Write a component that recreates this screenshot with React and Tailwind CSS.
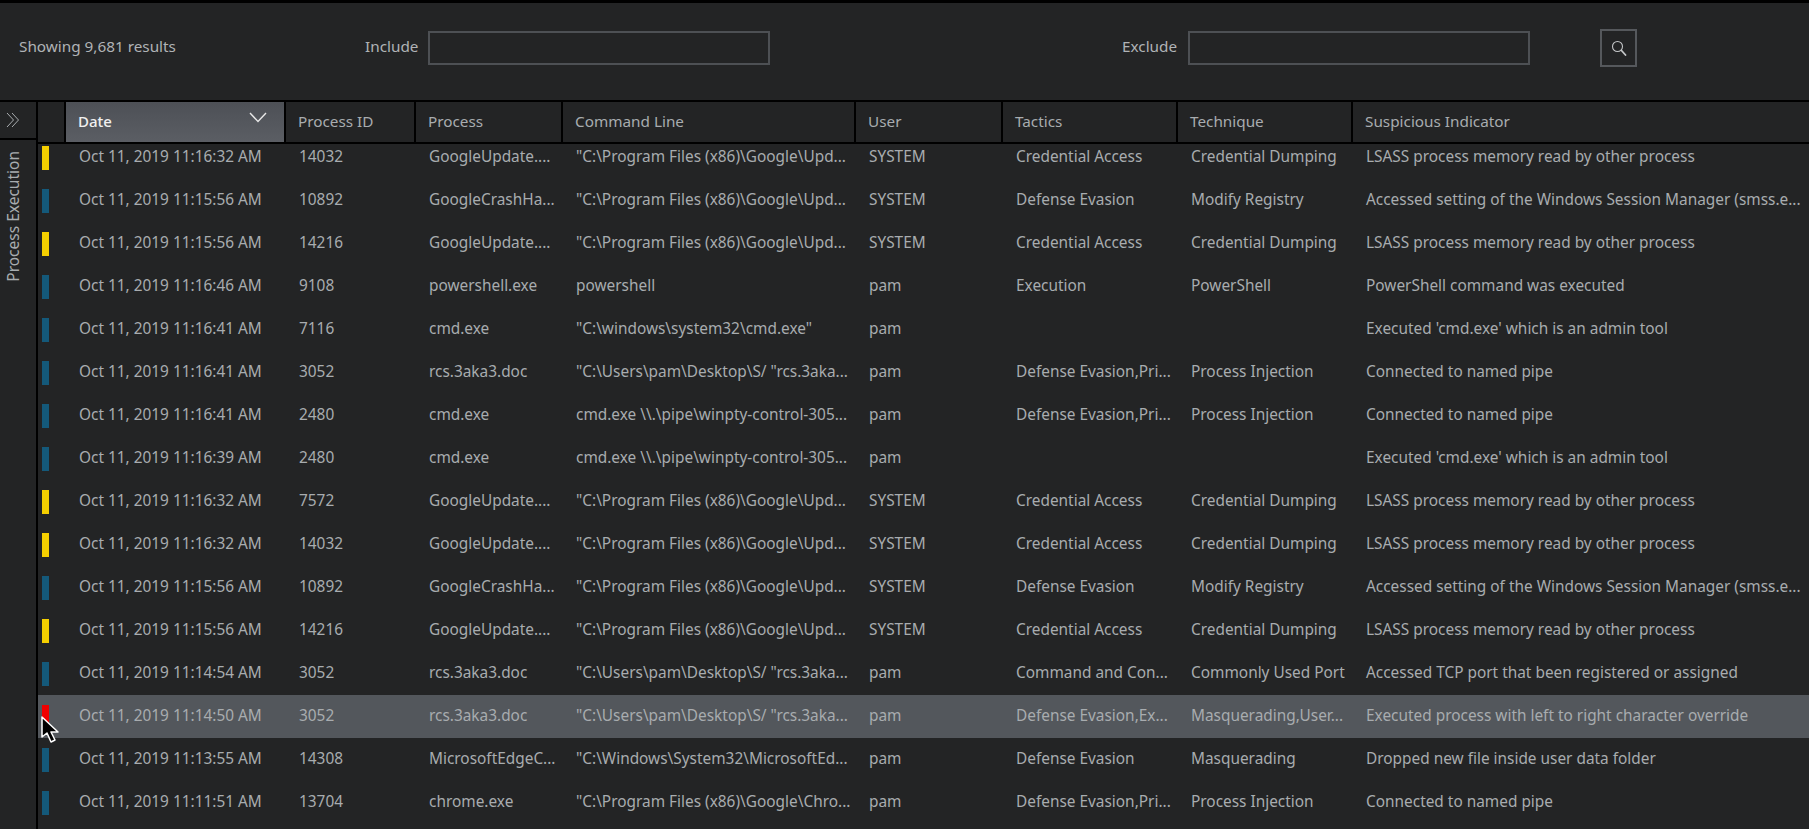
const GRID =
  "grid grid-cols-[28px_220px_130px_147px_293px_147px_175px_175px_1fr]";

const PF = '"C:\\Program Files (x86)\\Google\\Upd...';
const RCS = '"C:\\Users\\pam\\Desktop\\S/ "rcs.3aka...';
const LSASS = "LSASS process memory read by other process";
const SMSS = "Accessed setting of the Windows Session Manager (smss.e...";
const ADMIN = "Executed 'cmd.exe' which is an admin tool";
const PIPE = "Connected to named pipe";

const rows = [
  ["y", "Oct 11, 2019 11:16:32 AM", "14032", "GoogleUpdate....", PF, "SYSTEM", "Credential Access", "Credential Dumping", LSASS],
  ["b", "Oct 11, 2019 11:15:56 AM", "10892", "GoogleCrashHa...", PF, "SYSTEM", "Defense Evasion", "Modify Registry", SMSS],
  ["y", "Oct 11, 2019 11:15:56 AM", "14216", "GoogleUpdate....", PF, "SYSTEM", "Credential Access", "Credential Dumping", LSASS],
  ["b", "Oct 11, 2019 11:16:46 AM", "9108", "powershell.exe", "powershell", "pam", "Execution", "PowerShell", "PowerShell command was executed"],
  ["b", "Oct 11, 2019 11:16:41 AM", "7116", "cmd.exe", '"C:\\windows\\system32\\cmd.exe"', "pam", "", "", ADMIN],
  ["b", "Oct 11, 2019 11:16:41 AM", "3052", "rcs.3aka3.doc", RCS, "pam", "Defense Evasion,Pri...", "Process Injection", PIPE],
  ["b", "Oct 11, 2019 11:16:41 AM", "2480", "cmd.exe", "cmd.exe \\\\.\\pipe\\winpty-control-305...", "pam", "Defense Evasion,Pri...", "Process Injection", PIPE],
  ["b", "Oct 11, 2019 11:16:39 AM", "2480", "cmd.exe", "cmd.exe \\\\.\\pipe\\winpty-control-305...", "pam", "", "", ADMIN],
  ["y", "Oct 11, 2019 11:16:32 AM", "7572", "GoogleUpdate....", PF, "SYSTEM", "Credential Access", "Credential Dumping", LSASS],
  ["y", "Oct 11, 2019 11:16:32 AM", "14032", "GoogleUpdate....", PF, "SYSTEM", "Credential Access", "Credential Dumping", LSASS],
  ["b", "Oct 11, 2019 11:15:56 AM", "10892", "GoogleCrashHa...", PF, "SYSTEM", "Defense Evasion", "Modify Registry", SMSS],
  ["y", "Oct 11, 2019 11:15:56 AM", "14216", "GoogleUpdate....", PF, "SYSTEM", "Credential Access", "Credential Dumping", LSASS],
  ["b", "Oct 11, 2019 11:14:54 AM", "3052", "rcs.3aka3.doc", RCS, "pam", "Command and Con...", "Commonly Used Port", "Accessed TCP port that been registered or assigned"],
  ["r", "Oct 11, 2019 11:14:50 AM", "3052", "rcs.3aka3.doc", RCS, "pam", "Defense Evasion,Ex...", "Masquerading,User...", "Executed process with left to right character override"],
  ["b", "Oct 11, 2019 11:13:55 AM", "14308", "MicrosoftEdgeC...", '"C:\\Windows\\System32\\MicrosoftEd...', "pam", "Defense Evasion", "Masquerading", "Dropped new file inside user data folder"],
  ["b", "Oct 11, 2019 11:11:51 AM", "13704", "chrome.exe", '"C:\\Program Files (x86)\\Google\\Chro...', "pam", "Defense Evasion,Pri...", "Process Injection", PIPE],
];

const markers = {
  y: "bg-[#f5cf00]",
  b: "bg-[#14597a]",
  r: "bg-[#f00000]",
};

const headers = [
  "Process ID",
  "Process",
  "Command Line",
  "User",
  "Tactics",
  "Technique",
  "Suspicious Indicator",
];

function Cursor() {
  return (
    <svg
      className="absolute left-[40px] top-[713px]"
      width="20"
      height="27"
      viewBox="0 0 20 27"
    >
      <path
        d="M2 1 L2 21 L7 17 L11 26 L15 24 L11 16 L18 16 Z"
        fill="#000"
        stroke="#fff"
        strokeWidth="1.5"
        strokeLinejoin="round"
      />
    </svg>
  );
}

export default function App() {
  return (
    <div className="relative flex h-[829px] w-[1809px] flex-col overflow-hidden border-t-[3px] border-black bg-[#232425] font-['Noto_Sans',sans-serif] text-[15.4px] text-[#a8acaf]">
      {/* Filter bar */}
      <div className="flex h-[97px] shrink-0 items-center pb-[8px] text-[15.3px] text-[#b0b3b6]">
        <span className="mb-[2px] ml-[19px] w-[346px]">Showing 9,681 results</span>
        <span className="mb-[2px] w-[63px]">Include</span>
        <div className="h-[34px] w-[342px] border-2 border-[#4d5054]" />
        <span className="mb-[2px] ml-[352px] w-[66px]">Exclude</span>
        <div className="h-[34px] w-[342px] border-2 border-[#4d5054]" />
        <button className="ml-[70px] flex h-[38px] w-[37px] items-center justify-center border-2 border-[#55585c]">
          <svg width="16" height="16" viewBox="0 0 16 16" fill="none" stroke="#c4c6c8" strokeLinecap="round">
            <circle cx="6.5" cy="6.5" r="5" strokeWidth="1.1" />
            <line x1="10.5" y1="10.5" x2="14.5" y2="15" strokeWidth="1.8" />
          </svg>
        </button>
      </div>

      <div className="flex min-h-0 flex-1 border-t-2 border-black">
        {/* Collapsed side panel */}
        <div className="flex w-[38px] shrink-0 flex-col border-r-2 border-black">
          <div className="flex h-[38px] shrink-0 items-center justify-center border-b-2 border-black pr-[10px] text-[#a8acaf]">
            <svg width="14" height="16" viewBox="0 0 14 16" fill="none" stroke="currentColor" strokeWidth="1">
              <polyline points="1,1 7.5,8 1,15" />
              <polyline points="6,1 12.5,8 6,15" />
            </svg>
          </div>
          <div className="flex pl-[2px] pt-[11px]">
            <span className="rotate-180 whitespace-nowrap text-[15.5px] [writing-mode:vertical-rl]">
              Process Execution
            </span>
          </div>
        </div>

        <div className="flex min-w-0 flex-1 flex-col">
          {/* Column headers */}
          <div className={`${GRID} z-10 h-[42px] shrink-0 border-b-2 border-black bg-[#232425] text-[15.3px]`}>
            <div className="border-r-2 border-black" />
            <div className="relative flex items-center border-r-2 border-black bg-gradient-to-b from-[#4d5056] to-[#5b5e64] pb-[2px] pl-[12px] text-[15px] font-medium text-[#f0f0f0]">
              Date
              <svg
                className="absolute right-[17px] top-[10px]"
                width="18"
                height="11"
                viewBox="0 0 18 11"
                fill="none"
                stroke="#e8e8e8"
                strokeWidth="1.4"
              >
                <polyline points="1,1 9,9.5 17,1" />
              </svg>
            </div>
            {headers.map((h, i) => (
              <div
                key={h}
                className={`flex items-center pb-[2px] pl-[12px] ${i < headers.length - 1 ? "border-r-2 border-black" : ""}`}
              >
                {h}
              </div>
            ))}
          </div>

          {/* Rows, first one scrolled partly under the header */}
          <div className="min-h-0 flex-1 overflow-hidden">
            <div className="-mt-[8px]">
              {rows.map((r, i) => (
                <div
                  key={i}
                  className={`${GRID} h-[43px] items-center ${r[0] === "r" ? "bg-[#53575c]" : ""}`}
                >
                  <div className="pl-[4px]">
                    <div className={`h-[24px] w-[7px] ${markers[r[0]]}`} />
                  </div>
                  {r.slice(1).map((c, j) => (
                    <div key={j} className="truncate pb-[1px] pl-[13px]">
                      {c}
                    </div>
                  ))}
                </div>
              ))}
            </div>
          </div>
        </div>
      </div>

      <Cursor />
    </div>
  );
}
